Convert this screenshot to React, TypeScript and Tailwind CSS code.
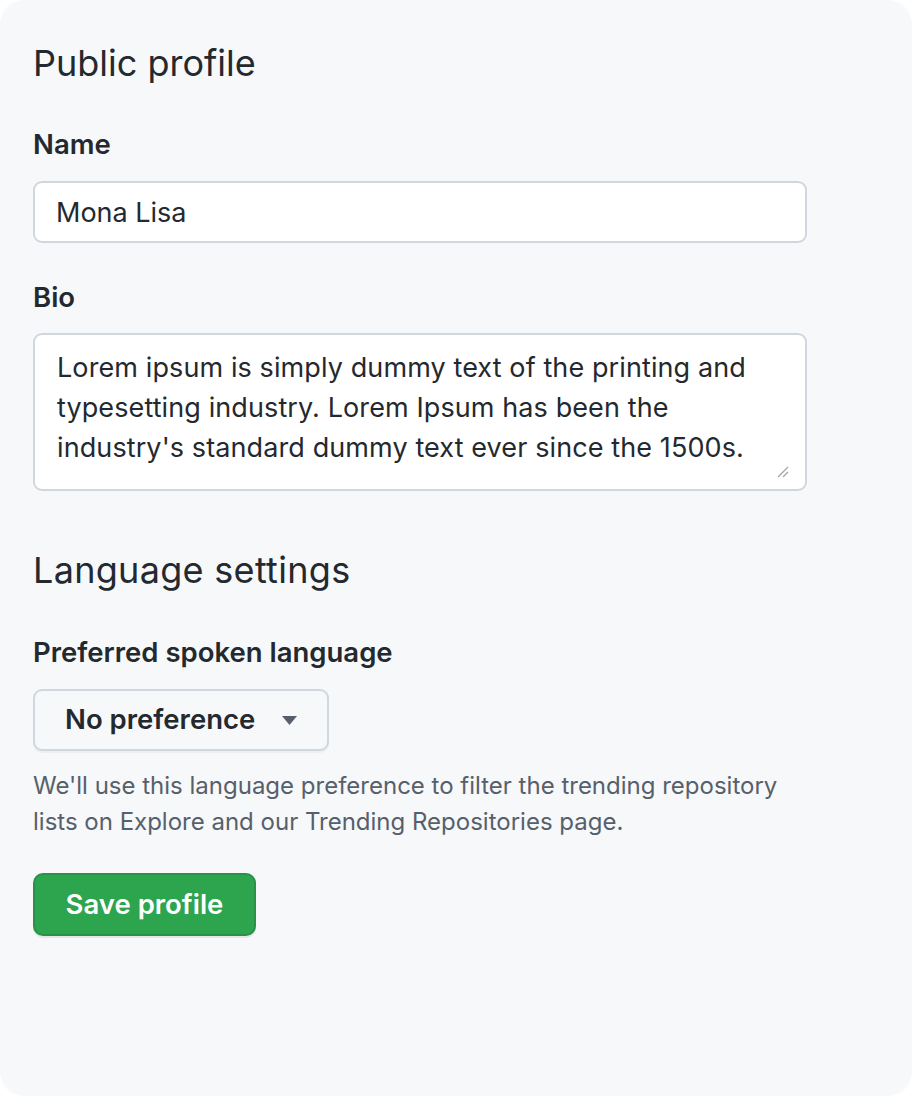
import * as React from "react";

const font = { fontFamily: "Inter, 'Noto Sans', sans-serif" };

const Label = ({ children, className = "" }: { children: React.ReactNode; className?: string }) => (
  <label className={`block text-[27.5px] font-semibold leading-[36px] text-[#24292f] ${className}`}>
    {children}
  </label>
);

export default function App() {
  const [name, setName] = React.useState("Mona Lisa");
  const [bio, setBio] = React.useState(
    "Lorem ipsum is simply dummy text of the printing and typesetting industry. Lorem Ipsum has been the industry's standard dummy text ever since the 1500s.",
  );

  return (
    <div className="h-[1096px] w-[912px] bg-white" style={font}>
      <div className="h-full w-full rounded-3xl bg-[#f6f8fa] px-[33px] pt-[39px] text-[#24292f]">
        <h2 className="text-[36px] font-normal leading-[48px]">Public profile</h2>

        <Label className="mt-[39px]">Name</Label>
        <input
          value={name}
          onChange={(e) => setName(e.target.value)}
          className="mt-[19px] block h-[62px] w-[774px] rounded-[9px] border-2 border-[#d0d7de] bg-white pl-[21px] text-[27px] text-[#24292f] outline-none"
        />

        <Label className="mt-[36px]">Bio</Label>
        <div className="relative mt-[18px] w-[774px]">
          <textarea
            value={bio}
            onChange={(e) => setBio(e.target.value)}
            className="block h-[158px] w-full resize-none rounded-[9px] border-2 border-[#d0d7de] bg-white pl-[22px] pr-[20px] pt-[13px] text-[27px] leading-[40px] tracking-[0.1px] text-[#24292f] outline-none"
          />
          {/* resize grip */}
          <svg className="absolute bottom-[13px] right-[18px]" width="12" height="12" viewBox="0 0 12 12">
            <path d="M1 11 11 1M6 11l5-5" stroke="#a0a7b0" strokeWidth="1.3" />
          </svg>
        </div>

        <h2 className="mt-[55px] text-[36px] font-normal leading-[48px] tracking-[0.3px]">Language settings</h2>

        <Label className="mt-[40px]">Preferred spoken language</Label>
        <button className="mt-[19px] flex h-[62px] w-[296px] items-center rounded-[9px] border-2 border-[#d0d7de] bg-[#f6f8fa] pl-[30px] shadow-[0_2px_0_rgba(27,31,36,0.04)]">
          <span className="text-[27.5px] font-semibold text-[#24292f]">No preference</span>
          <svg className="ml-[27px]" width="15" height="9" viewBox="0 0 15 9">
            <path d="M0 0h15L7.5 9z" fill="#57606a" />
          </svg>
        </button>

        <p className="mt-[17px] w-[774px] text-[24px] leading-[36px] text-[#57606a]">
          We'll use this language preference to filter the trending repository lists on Explore and our
          Trending Repositories page.
        </p>

        <button className="mt-[33px] flex h-[63px] w-[223px] items-center justify-center rounded-[10px] border-2 border-[#2a9147] bg-[#2da44e] text-[27.5px] font-semibold text-white shadow-[0_2px_0_rgba(27,31,36,0.08)]">
          Save profile
        </button>
      </div>
    </div>
  );
}
